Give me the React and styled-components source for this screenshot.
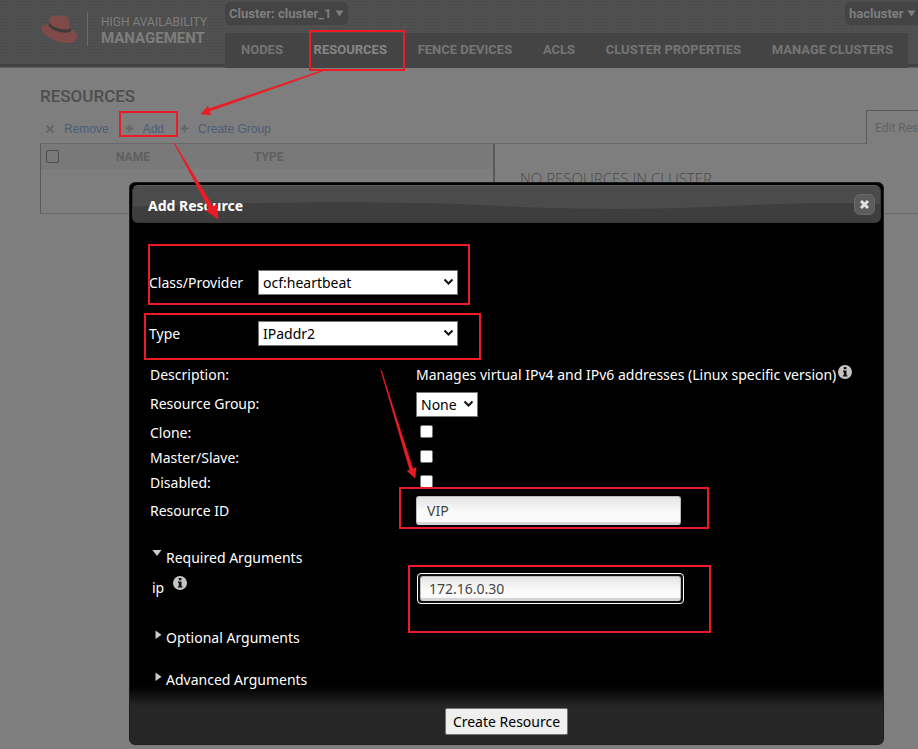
import React, { useState } from "react";
import styled, { createGlobalStyle } from "styled-components";

const uiFont = '"Noto Sans", "Open Sans", sans-serif';
const headFont = 'Roboto, "Liberation Sans", sans-serif';

const GlobalStyle = createGlobalStyle`
  *, *::before, *::after { box-sizing: border-box; }
  body { margin: 0; background: #7e7e7e; font-family: ${uiFont}; }
  button, input, select { font-family: inherit; }
`;

const Page = styled.div`
  position: relative;
  min-height: 100vh;
  overflow: hidden;
  background: #7e7e7e;
`;

/* ---------- masthead ---------- */

const Masthead = styled.header`
  display: grid;
  grid-template-columns: 225px 1fr;
  height: 68px;
  border-bottom: 1px solid #5e5e5e;
  background:
    linear-gradient(to top, #434343 3px, transparent 3px),
    radial-gradient(circle, #484848 1px, transparent 1px) 0 0 / 3px 3px,
    #505050;
`;

const Brand = styled.div`
  display: flex;
  align-items: flex-start;
  padding: 12px 0 0 41px;
`;

const BrandText = styled.div`
  display: flex;
  flex-direction: column;
  margin-left: 9px;
  padding-left: 13px;
  border-left: 1px solid #6a6a6a;
  height: 34px;
  color: #7e7e7e;
  font-family: ${headFont};
  font-size: 12px;
  line-height: 20px;
  white-space: nowrap;

  strong {
    font-size: 15px;
    line-height: 12px;
  }
`;

const MastRight = styled.div`
  display: flex;
  flex-direction: column;
  justify-content: space-between;
  min-width: 0;
`;

const ChipRow = styled.div`
  display: flex;
  justify-content: space-between;
  padding-top: 2px;
`;

const Chip = styled.button`
  display: flex;
  align-items: center;
  gap: 3px;
  width: ${(p) => p.$width}px;
  height: 23px;
  padding: 0 4px;
  border: 0;
  border-radius: ${(p) => (p.$cut ? "5px 0 0 5px" : "5px")};
  background: #444;
  color: #7e7e7e;
  font-family: ${headFont};
  font-size: 13px;
  font-weight: 700;
  white-space: nowrap;

  svg { flex: none; }
`;

const Nav = styled.nav`
  display: flex;
  align-items: center;
  justify-content: space-between;
  height: 35px;
  margin: 0 10px -1px 0;
  padding: 0 15px 2px 16px;
  background: #444;
`;

const NavLink = styled.a`
  color: ${(p) => (p.$active ? "#868686" : "#757575")};
  font-family: ${headFont};
  font-size: 13px;
  font-weight: 700;
  line-height: 16px;
  text-decoration: none;
  white-space: nowrap;
`;

/* ---------- resource list behind the dialog ---------- */

const Main = styled.main`
  display: flex;
  flex-direction: column;
  padding: 18px 0 0 40px;
`;

const PageTitle = styled.h1`
  margin: 0;
  color: #4e4e4e;
  font-family: ${headFont};
  font-size: 17px;
  font-weight: 500;
  line-height: 20px;
`;

const ToolRow = styled.div`
  display: flex;
  justify-content: space-between;
  margin-top: 4px;
  height: 34px;
`;

const Tools = styled.div`
  flex: 1;
  display: flex;
  align-items: center;
  padding: 4px 0 0 5px;
  border-bottom: 1px solid #686868;
`;

const ToolLink = styled.a`
  display: flex;
  align-items: center;
  gap: 9px;
  margin-right: 16px;
  color: #4b5c75;
  font-family: "Liberation Sans", Arial, sans-serif;
  font-size: 12px;
  line-height: 16px;
  text-decoration: none;
  white-space: nowrap;

  svg { display: block; }
`;

const Tab = styled.button`
  width: 52px;
  padding: 0 0 0 8px;
  border: solid #5a5a5a;
  border-width: 1px 0 0 1px;
  background: none;
  color: #626262;
  font-family: ${headFont};
  font-size: 12px;
  font-weight: 400;
  text-align: left;
  white-space: nowrap;
`;

const Panels = styled.div`
  display: grid;
  grid-template-columns: 455px 1fr;
  height: 70px;
  border-bottom: 1px solid #6a6a6a;
`;

const ListPanel = styled.div`
  border: solid #5a5a5a;
  border-width: 0 2px 0 1px;
`;

const ResourceTable = styled.table`
  width: 100%;
  border-collapse: collapse;
  background: #797979;
  table-layout: fixed;

  th {
    height: 25px;
    padding: 0;
    color: #606060;
    font-family: ${headFont};
    font-size: 12px;
    font-weight: 700;
    line-height: 16px;
    text-align: left;
  }
  th:nth-child(1) { width: 75px; padding-left: 5px; }
  th:nth-child(2) { width: 138px; }
`;

const DimCheckbox = styled.input`
  appearance: none;
  display: block;
  width: 13px;
  height: 13px;
  margin: 0;
  border: 1px solid #4c4c4c;
  border-radius: 2px;
`;

const EmptyNote = styled.p`
  margin: 0;
  padding: 24px 0 0 25px;
  color: #4a4a4a;
  font-family: "Open Sans", sans-serif;
  font-size: 15px;
  font-weight: 300;
  line-height: 20px;
`;

/* ---------- dialog ---------- */

const Overlay = styled.div`
  position: absolute;
  inset: 0;
  padding: 182px 34px 4px 129px;
`;

const Dialog = styled.section`
  display: flex;
  flex-direction: column;
  padding: 2px;
  border: 1px solid #1d1d1d;
  border-radius: 6px;
  background: linear-gradient(to top, #262626 38px, #000 58px);
  color: #fff;
  font-size: 14px;
  line-height: 20px;
`;

const TitleBar = styled.header`
  position: relative;
  display: flex;
  align-items: center;
  justify-content: space-between;
  height: 38px;
  padding: 0 5px 0 15px;
  border: 1px solid #383838;
  border-top-color: #5c5c5c;
  border-radius: 6px;
  background: #4b4b4b;
  overflow: hidden;
`;

const TitleWave = styled.svg`
  position: absolute;
  inset: 0;
  width: 100%;
  height: 100%;
`;

const Title = styled.h2`
  position: relative;
  margin: 0;
  padding-top: 3px;
  font-size: 14px;
  line-height: 20px;
  font-weight: 700;
`;

const CloseButton = styled.button`
  position: relative;
  display: grid;
  place-items: center;
  width: 21px;
  height: 21px;
  padding: 0;
  border: 1px solid #696969;
  border-radius: 6px;
  background: #5c5c5c;
`;

const ProviderRows = styled.div`
  display: grid;
  grid-template-columns: 109px 1fr;
  row-gap: 26px;
  padding: 47px 0 0 17px;

  label { line-height: 25px; }
`;

const Picker = styled.span`
  position: relative;
  display: block;
  width: ${(p) => p.$width}px;
  height: 25px;

  select {
    appearance: none;
    display: block;
    width: 100%;
    height: 100%;
    padding: 0 4px;
    border: 1px solid #767676;
    border-radius: 0;
    background: #fff;
    color: #000;
    font-size: 14px;
  }
  svg {
    position: absolute;
    top: 8px;
    right: 4px;
    pointer-events: none;
  }
`;

const FieldGrid = styled.div`
  padding: 15px 0 0 18px;
`;

const Field = styled.div`
  display: grid;
  grid-template-columns: 266px 1fr;
  align-items: center;
  height: ${(p) => p.$height}px;
`;

const Description = styled.span`
  display: flex;
  align-items: flex-start;
  gap: 2px;
  white-space: nowrap;

  svg { flex: none; }
`;

const Check = styled.input`
  appearance: none;
  width: 13px;
  height: 13px;
  margin: 0 0 2px 4px;
  border: 1px solid #767676;
  border-radius: 2px;
  background: #fff;
`;

const TextBox = styled.input`
  width: 265px;
  height: 29px;
  padding: 2px 10px 0;
  border: 1px solid #bbb;
  border-bottom: 3px solid #d5d5d5;
  border-radius: 3px;
  background: linear-gradient(#e4e4e4, #fafafa 60%);
  color: #444;
  font-size: 14px;
  outline: none;
`;

const FocusRing = styled.span`
  display: block;
  justify-self: start;
  padding: 2px;
  border: 1px solid #fff;
  border-radius: 4px;
  background: #101010;

  input { display: block; width: 261px; height: 25px; padding: 2px 8px 0; }
`;

const Section = styled.button`
  display: flex;
  align-items: flex-start;
  gap: 4px;
  margin: ${(p) => p.$gap}px 0 0 20px;
  padding: 0;
  border: 0;
  background: none;
  color: #fff;
  font-size: 14px;
  line-height: 20px;

  svg { margin-top: 2px; }
`;

const ArgumentRow = styled.div`
  display: grid;
  grid-template-columns: 265px 1fr;
  align-items: center;
  height: 40px;
  padding-left: 20px;
`;

const ArgLabel = styled.span`
  display: flex;
  gap: 9px;
  align-items: flex-start;

  label { line-height: 24px; }
`;

const Footer = styled.footer`
  display: flex;
  justify-content: center;
  padding: 18px 0 7px;
`;

const CreateButton = styled.button`
  height: 27px;
  padding: 0 7px;
  border: 1px solid #767676;
  border-radius: 2px;
  background: #efefef;
  color: #000;
  font-size: 14px;
`;

/* ---------- markup drawn on top ---------- */

const Markup = styled.svg`
  position: absolute;
  top: 0;
  left: 0;
  pointer-events: none;
`;

const HatLogo = () => (
  <svg width="37" height="32" viewBox="0 0 37 32" aria-hidden="true">
    <path
      d="M10 4.5C11 3.2 13 3.3 15.5 4.2C17.6 4.8 18.4 3.3 20.5 3.2C23.7 3.2 26.5 4.4 27.4 6.2L30.2 17.2C34 18.6 36.5 21.5 36 25.2C35.4 29.5 31 31.2 25.5 30.9C16 30.6 3 24.5 0.4 17.2C-0.3 14.4 2.6 12.6 7.2 12.7Z"
      fill="#814a4a"
    />
    <path
      d="M7.4 12.4C7.6 16.8 19 21.2 26.5 20.6C29.4 20.3 30.5 19 30.2 17.2L29.6 14.7C29.6 17 27.5 17.6 24.6 17.6C18 17.4 9.4 14 8 10.4Z"
      fill="#3c3c3c"
    />
  </svg>
);

const Chevron = () => (
  <svg width="11" height="8" viewBox="0 0 11 8" aria-hidden="true">
    <path d="M1.5 1.5L5.5 5.5L9.5 1.5" fill="none" stroke="#111" strokeWidth="2" />
  </svg>
);

const CaretDown = () => (
  <svg width="9" height="7" viewBox="0 0 9 7" aria-hidden="true">
    <path d="M0.5 0.5H8.5L4.5 6.5Z" fill="#7e7e7e" />
  </svg>
);

const InfoIcon = () => (
  <svg width="14" height="14" viewBox="0 0 14 14" role="img" aria-label="Info">
    <circle cx="7" cy="7" r="7" fill="#c4c4c4" />
    <path d="M5.8 2H8.4V4.3H5.8ZM5 5.5H8.5V10.2H9.4V11.6H4.9V10.2H5.8V6.9H5Z" fill="#111" />
  </svg>
);

const Disclosure = ({ open }) => (
  <svg width="10" height="10" viewBox="0 0 10 10" aria-hidden="true">
    <path d={open ? "M0.5 0H9.5L5 6Z" : "M3.5 0.5V9L9.5 4.8Z"} fill="#ccc" />
  </svg>
);

const PlusIcon = () => (
  <svg width="9" height="9" viewBox="0 0 9 9" aria-hidden="true">
    <path d="M4.5 0.5V8.5M0.5 4.5H8.5" stroke="#656565" strokeWidth="2" />
  </svg>
);

const CrossIcon = () => (
  <svg width="10" height="10" viewBox="0 0 10 10" aria-hidden="true">
    <path d="M1.5 1.5L8.5 8.5M8.5 1.5L1.5 8.5" stroke="#656565" strokeWidth="2" />
  </svg>
);

const boxes = [
  [310, 31, 94, 39],
  [120, 112, 57, 24],
  [149, 245, 320, 59],
  [145, 314, 335, 45],
  [400, 488, 308, 40],
  [409, 566, 301, 66],
];

const arrows = [
  "M322 70.5L209 108.8L207.8 106.2L201 114L210.5 115L209.5 111.2L322 71.5Z",
  "M174 143L209 208.5L206 210.5L218 219L217 204.5L213 206.5L174.6 143Z",
  "M380.7 370L409.8 470L407.2 470.9L415 478L416.2 467.5L412.8 468.8L381.3 370Z",
];

const navItems = [
  "NODES",
  "RESOURCES",
  "FENCE DEVICES",
  "ACLS",
  "CLUSTER PROPERTIES",
  "MANAGE CLUSTERS",
];

const flags = [
  ["clone", "Clone:"],
  ["master", "Master/Slave:"],
  ["disabled", "Disabled:"],
];

function SelectBox({ id, width, options }) {
  return (
    <Picker $width={width}>
      <select id={id}>
        {options.map((o) => (
          <option key={o}>{o}</option>
        ))}
      </select>
      <Chevron />
    </Picker>
  );
}

export default function App() {
  const [resourceId, setResourceId] = useState("VIP");
  const [ip, setIp] = useState("172.16.0.30");

  return (
    <Page>
      <GlobalStyle />
      <Masthead>
        <Brand>
          <HatLogo />
          <BrandText>
            <span>HIGH AVAILABILITY</span>
            <strong>MANAGEMENT</strong>
          </BrandText>
        </Brand>
        <MastRight>
          <ChipRow>
            <Chip $width={123}>
              Cluster: cluster_1 <CaretDown />
            </Chip>
            <Chip $width={73} $cut>
              hacluster <CaretDown />
            </Chip>
          </ChipRow>
          <Nav>
            {navItems.map((n) => (
              <NavLink key={n} href="#" $active={n === "RESOURCES"}>
                {n}
              </NavLink>
            ))}
          </Nav>
        </MastRight>
      </Masthead>

      <Main>
        <PageTitle>RESOURCES</PageTitle>
        <ToolRow>
          <Tools>
            <ToolLink href="#"><CrossIcon />Remove</ToolLink>
            <ToolLink href="#"><PlusIcon />Add</ToolLink>
            <ToolLink href="#"><PlusIcon />Create Group</ToolLink>
          </Tools>
          <Tab>Edit Res</Tab>
        </ToolRow>
        <Panels>
          <ListPanel>
            <ResourceTable>
              <thead>
                <tr>
                  <th><DimCheckbox type="checkbox" aria-label="Select all" /></th>
                  <th>NAME</th>
                  <th>TYPE</th>
                </tr>
              </thead>
            </ResourceTable>
          </ListPanel>
          <EmptyNote>NO RESOURCES IN CLUSTER</EmptyNote>
        </Panels>
      </Main>

      <Overlay>
        <Dialog role="dialog" aria-labelledby="dialog-title">
          <TitleBar>
            <TitleWave viewBox="0 0 750 38" preserveAspectRatio="none" aria-hidden="true">
              <path d="M0 22C150 16 250 16 350 20C450 26 520 25 600 21C660 18 710 17 750 19V38H0Z" fill="#3e3e3e" />
            </TitleWave>
            <Title id="dialog-title">Add Resource</Title>
            <CloseButton aria-label="Close">
              <svg width="11" height="11" viewBox="0 0 11 11" aria-hidden="true">
                <path d="M2 2L9 9M9 2L2 9" stroke="#e0e0e0" strokeWidth="3" />
              </svg>
            </CloseButton>
          </TitleBar>

          <ProviderRows>
            <label htmlFor="provider">Class/Provider</label>
            <SelectBox id="provider" width={200} options={["ocf:heartbeat"]} />
            <label htmlFor="type">Type</label>
            <SelectBox id="type" width={200} options={["IPaddr2"]} />
          </ProviderRows>

          <FieldGrid>
            <Field $height={27}>
              <span>Description:</span>
              <Description>
                Manages virtual IPv4 and IPv6 addresses (Linux specific version)
                <InfoIcon />
              </Description>
            </Field>
            <Field $height={32}>
              <label htmlFor="group">Resource Group:</label>
              <SelectBox id="group" width={62} options={["None"]} />
            </Field>
            {flags.map(([id, label]) => (
              <Field key={id} $height={25}>
                <label htmlFor={id}>{label}</label>
                <Check id={id} type="checkbox" />
              </Field>
            ))}
            <Field $height={31}>
              <label htmlFor="resource-id">Resource ID</label>
              <TextBox
                id="resource-id"
                value={resourceId}
                onChange={(e) => setResourceId(e.target.value)}
              />
            </Field>
          </FieldGrid>

          <Section $gap={22} aria-expanded="true">
            <Disclosure open />
            Required Arguments
          </Section>
          <ArgumentRow>
            <ArgLabel>
              <label htmlFor="ip">ip</label>
              <InfoIcon />
            </ArgLabel>
            <FocusRing>
              <TextBox id="ip" value={ip} onChange={(e) => setIp(e.target.value)} />
            </FocusRing>
          </ArgumentRow>
          <Section $gap={20} aria-expanded="false">
            <Disclosure />
            Optional Arguments
          </Section>
          <Section $gap={22} aria-expanded="false">
            <Disclosure />
            Advanced Arguments
          </Section>

          <Footer>
            <CreateButton>Create Resource</CreateButton>
          </Footer>
        </Dialog>
      </Overlay>

      <Markup width="918" height="749" viewBox="0 0 918 749" aria-hidden="true">
        {boxes.map(([x, y, w, h]) => (
          <rect key={`${x}-${y}`} x={x} y={y} width={w} height={h} fill="none" stroke="#ed1c24" strokeWidth="2" />
        ))}
        {arrows.map((d) => (
          <path key={d} d={d} fill="#ed1c24" stroke="#ed1c24" strokeWidth="0.5" />
        ))}
      </Markup>
    </Page>
  );
}
